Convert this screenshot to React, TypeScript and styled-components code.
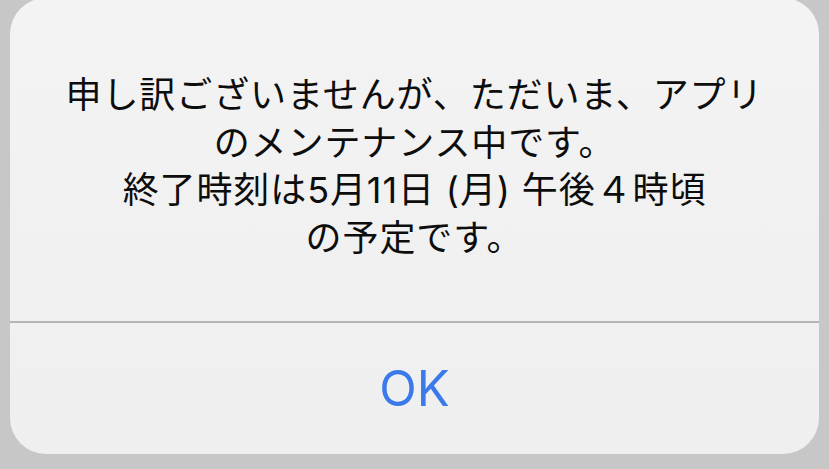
import React from 'react';
import styled, { createGlobalStyle } from 'styled-components';

const GlobalStyle = createGlobalStyle`
  html, body {
    margin: 0;
    padding: 0;
    background: #c7c7c7;
  }
  body {
    font-family: 'Inter', 'Noto Sans CJK JP', sans-serif;
  }
`;

const lines = [
  '申し訳ございませんが、ただいま、アプリ',
  'のメンテナンス中です。',
  '終了時刻は5月11日 (月) 午後４時頃',
  'の予定です。',
];

function App() {
  return (
    <>
      <GlobalStyle />
      <Screen>
        <Alert>
          <Message>
            {lines.map((line) => (
              <Line key={line}>{line}</Line>
            ))}
          </Message>
          <Divider />
          <ActionButton type="button">OK</ActionButton>
        </Alert>
      </Screen>
    </>
  );
}

export default App;

const Screen = styled.div`
  width: 829px;
  height: 469px;
  display: flex;
  justify-content: center;
  align-items: flex-start;
  padding: 0 10px 15px;
  box-sizing: border-box;
  overflow: hidden;
`;

const Alert = styled.div`
  width: 809px;
  height: 456px;
  margin-top: -2px;
  display: flex;
  flex-direction: column;
  background: linear-gradient(180deg, #f3f3f4 0%, #efeff0 100%);
  border-radius: 36px;
  overflow: hidden;
`;

const Message = styled.div`
  flex: none;
  height: 323px;
  padding-top: 74px;
  box-sizing: border-box;
  display: flex;
  flex-direction: column;
  align-items: center;
`;

const Line = styled.p`
  margin: 0;
  font-family: 'Inter', 'Noto Sans CJK JP', sans-serif;
  font-size: 36px;
  line-height: 47.5px;
  font-weight: 400;
  color: #0d0d0d;
  white-space: nowrap;
  letter-spacing: 0.9px;
`;

const Divider = styled.div`
  flex: none;
  height: 2px;
  background: #b4b4b6;
`;

const ActionButton = styled.button`
  flex: 1;
  border: 0;
  background: transparent;
  padding: 0;
  font-family: 'Inter', 'Liberation Sans', sans-serif;
  font-size: 49px;
  font-weight: 400;
  color: #3a7aeb;
  cursor: pointer;
`;
